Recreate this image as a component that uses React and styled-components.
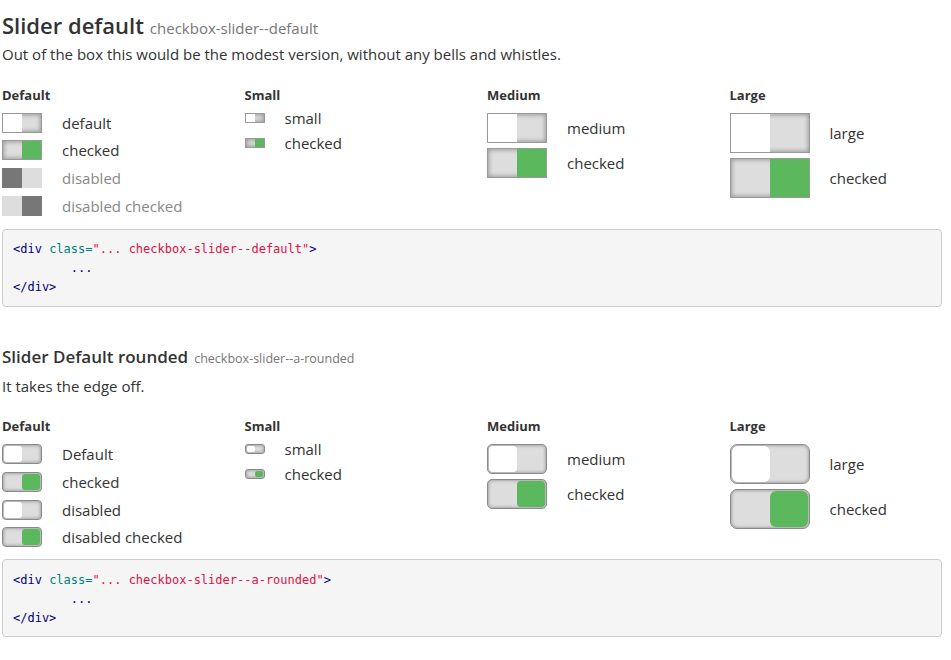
import React from 'react'
import styled, { createGlobalStyle, css } from 'styled-components'

const GlobalStyle = createGlobalStyle`
    body {
        margin:0;
        background:#fff;
        font-family:'Open Sans', 'Noto Sans', sans-serif;
        color:#333;
    }
`

const Page = styled.div`
    width:940px;
    padding:0 0 20px 2px;
`

const Section = styled.section`
    margin-top:${props => props.$top}px;
`

const Title = styled.h2`
    margin:0;
    font-size:${props => props.$size}px;
    line-height:1.1;
    font-weight:600;
    color:#333;
`

const TitleTag = styled.small`
    font-size:${props => props.$size}px;
    font-weight:400;
    color:#777;
    margin-left:6px;
`

const Lead = styled.p`
    margin:${props => props.$top}px 0 0;
    font-size:15px;
    line-height:21px;
`

const Grid = styled.div`
    display:grid;
    grid-template-columns:242.5px 242.5px 242.5px 1fr;
    margin-top:20.5px;
`

const Column = styled.div`
    display:flex;
    flex-direction:column;
    gap:${props => props.$gap}px;
`

const ColumnTitle = styled.div`
    font-size:13px;
    font-weight:700;
    line-height:18px;
    margin-bottom:${props => 9 - props.$gap}px;
`

const Row = styled.div`
    display:flex;
    align-items:center;
    gap:20px;
    height:${props => props.$h}px;
`

const Label = styled.span`
    font-size:15px;
    line-height:20px;
    white-space:nowrap;
    color:${props => props.$muted ? '#888' : '#333'};
`

const sizes = {
    default: { w: 40, h: 20, r: 4 },
    small: { w: 20, h: 10, r: 3 },
    medium: { w: 60, h: 30, r: 5 },
    large: { w: 80, h: 40, r: 7 },
}

const Track = styled.span`
    flex:none;
    box-sizing:border-box;
    display:flex;
    justify-content:${props => props.$checked ? 'flex-end' : 'flex-start'};
    width:${props => sizes[props.$size].w}px;
    height:${props => sizes[props.$size].h}px;
    background:#ddd;
    ${props => props.$rounded ? css`
        border:1px solid #8a8a8a;
        border-radius:${sizes[props.$size].r}px;
        box-shadow:inset 0 0 3px 1px #a6a6a6;
        padding:1px;
    ` : props.$disabled ? css`
        border:none;
    ` : css`
        border:1px solid #999;
        box-shadow:inset 0 0 4px 1px #9a9a9a;
    `}
`

const Knob = styled.span`
    width:50%;
    height:100%;
    background:${props => props.$disabled && !props.$rounded ? '#777' : props.$checked ? '#5cb85c' : '#fff'};
    border-radius:${props => props.$rounded ? sizes[props.$size].r - 1 : 0}px;
`

const Slider = ({ size, checked, disabled, rounded }) => (
    <Track $size={size} $checked={checked} $disabled={disabled} $rounded={rounded}>
        <Knob $size={size} $checked={checked} $disabled={disabled} $rounded={rounded} />
    </Track>
)

const CodeBox = styled.pre`
    margin:${props => props.$top}px 0 0;
    padding:10.5px 10px 8.5px;
    background:#f5f5f5;
    border:1px solid #ccc;
    border-radius:4px;
    font-family:'DejaVu Sans Mono', 'Liberation Mono', monospace;
    font-size:12px;
    line-height:19px;
    color:#000080;
    tab-size:8;
`

const Tag = styled.span`
    color:#000080;
`
const Attr = styled.span`
    color:#008080;
`
const Str = styled.span`
    color:#dd1144;
`

const columns = (rounded) => [
    {
        title: 'Default', size: 'default', gap: 7.7,
        rows: [
            { label: rounded ? 'Default' : 'default' },
            { label: 'checked', checked: true },
            { label: 'disabled', disabled: true },
            { label: 'disabled checked', checked: true, disabled: true },
        ],
    },
    {
        title: 'Small', size: 'small', gap: 15,
        rows: [{ label: 'small' }, { label: 'checked', checked: true }],
    },
    {
        title: 'Medium', size: 'medium', gap: 5,
        rows: [{ label: 'medium' }, { label: 'checked', checked: true }],
    },
    {
        title: 'Large', size: 'large', gap: 5,
        rows: [{ label: 'large' }, { label: 'checked', checked: true }],
    },
]

const Demo = ({ rounded }) => (
    <Grid>
        {columns(rounded).map(col => (
            <Column key={col.title} $gap={col.gap}>
                <ColumnTitle $gap={col.gap}>{col.title}</ColumnTitle>
                {col.rows.map(row => (
                    <Row key={row.label} $h={sizes[col.size].h}>
                        <Slider size={col.size} checked={row.checked} disabled={row.disabled} rounded={rounded} />
                        <Label $muted={row.disabled && !rounded}>{row.label}</Label>
                    </Row>
                ))}
            </Column>
        ))}
    </Grid>
)

const Snippet = ({ name, top }) => (
    <CodeBox $top={top}>
        <Tag>&lt;div</Tag> <Attr>class=</Attr><Str>"... {name}"</Str><Tag>&gt;</Tag>{'\n'}
        {'\t...\n'}
        <Tag>&lt;/div&gt;</Tag>
    </CodeBox>
)

const App = () => {
    return (
        <Page>
            <GlobalStyle />
            <Section $top={13}>
                <Title $size={22}>
                    Slider default<TitleTag $size={15}>checkbox-slider--default</TitleTag>
                </Title>
                <Lead $top={7}>Out of the box this would be the modest version, without any bells and whistles.</Lead>
                <Demo />
                <Snippet name="checkbox-slider--default" top={13} />
            </Section>
            <Section $top={41}>
                <Title as="h3" $size={17}>
                    Slider Default rounded<TitleTag $size={12.5}>checkbox-slider--a-rounded</TitleTag>
                </Title>
                <Lead $top={9.5}>It takes the edge off.</Lead>
                <Demo rounded />
                <Snippet name="checkbox-slider--a-rounded" top={12} />
            </Section>
        </Page>
    )
}

export default App
